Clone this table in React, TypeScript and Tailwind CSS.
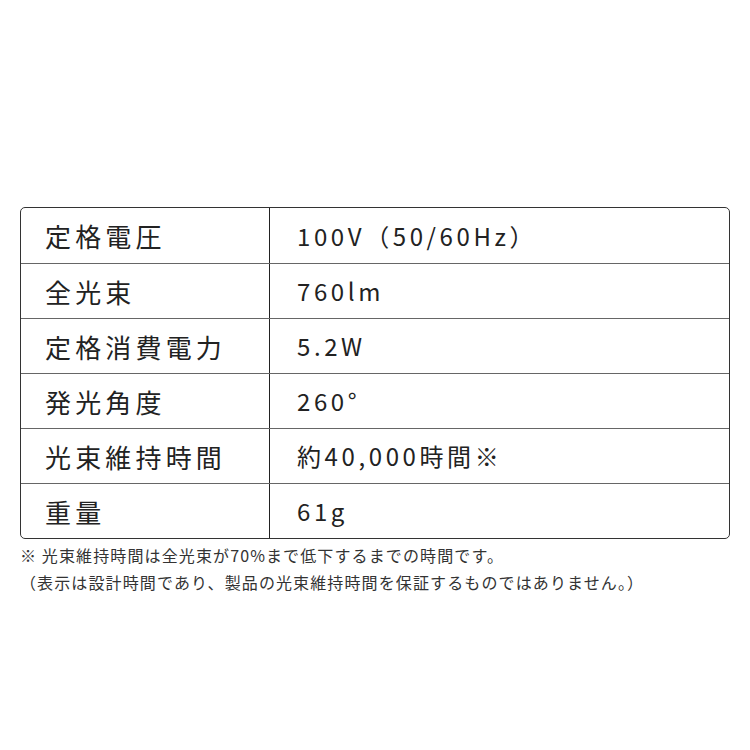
const rows: [string, string][] = [
  ["定格電圧", "100V（50/60Hz）"],
  ["全光束", "760lm"],
  ["定格消費電力", "5.2W"],
  ["発光角度", "260°"],
  ["光束維持時間", "約40,000時間※"],
  ["重量", "61g"],
];

export default function App() {
  return (
    <div
      className="w-[750px] h-[750px] bg-white text-[#222] flex flex-col pt-[207px] px-[20px]"
      style={{ fontFamily: '"Noto Sans CJK JP", "Noto Sans", sans-serif' }}
    >
      <div className="w-[710px] border border-[#333] rounded-[5px] overflow-hidden">
        {rows.map(([label, value], i) => (
          <div
            key={label}
            className={
              i === 0
                ? "flex h-[55px] items-center"
                : "flex h-[55px] items-center border-t border-[#666]"
            }
          >
            <div className="w-[249px] h-full flex items-center pl-[24px] border-r border-[#222] text-[26px] tracking-[0.16em]">
              {label}
            </div>
            <div className="flex-1 pl-[27px] text-[24px] tracking-[0.15em]">
              {value}
            </div>
          </div>
        ))}
      </div>
      <div className="mt-[3px] text-[16px] leading-[27px] tracking-[0.07em] text-[#333]">
        <p>※ 光束維持時間は全光束が70%まで低下するまでの時間です。</p>
        <p>（表示は設計時間であり、製品の光束維持時間を保証するものではありません。）</p>
      </div>
    </div>
  );
}
